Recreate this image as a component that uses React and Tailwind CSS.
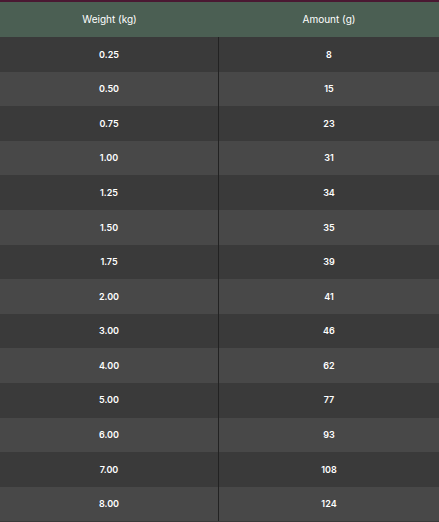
import React from 'react';

const rows = [
  ['0.25', '8'],
  ['0.50', '15'],
  ['0.75', '23'],
  ['1.00', '31'],
  ['1.25', '34'],
  ['1.50', '35'],
  ['1.75', '39'],
  ['2.00', '41'],
  ['3.00', '46'],
  ['4.00', '62'],
  ['5.00', '77'],
  ['6.00', '93'],
  ['7.00', '108'],
  ['8.00', '124'],
];

const App = () => {
  return (
    <div className="w-[439px] h-[522px] overflow-hidden bg-[#3a3a3a] border-t-2 border-[#4a1832] font-['Inter',sans-serif] text-white">
      {/* Header */}
      <div className="grid grid-cols-[219px_1fr] h-[35px] bg-[#4b5f53] text-[10px] items-center">
        <div className="text-center">Weight (kg)</div>
        <div className="text-center">Amount (g)</div>
      </div>

      {/* Body */}
      {rows.map(([weight, amount], i) => (
        <div
          key={weight}
          className={`grid grid-cols-[219px_1fr] h-[34.6px] text-[9px] font-semibold ${
            i % 2 === 0 ? 'bg-[#3a3a3a]' : 'bg-[#484848]'
          }`}
        >
          <div className="flex items-center justify-center border-r border-[#222222]">{weight}</div>
          <div className="flex items-center justify-center">{amount}</div>
        </div>
      ))}
    </div>
  );
};

export default App;
